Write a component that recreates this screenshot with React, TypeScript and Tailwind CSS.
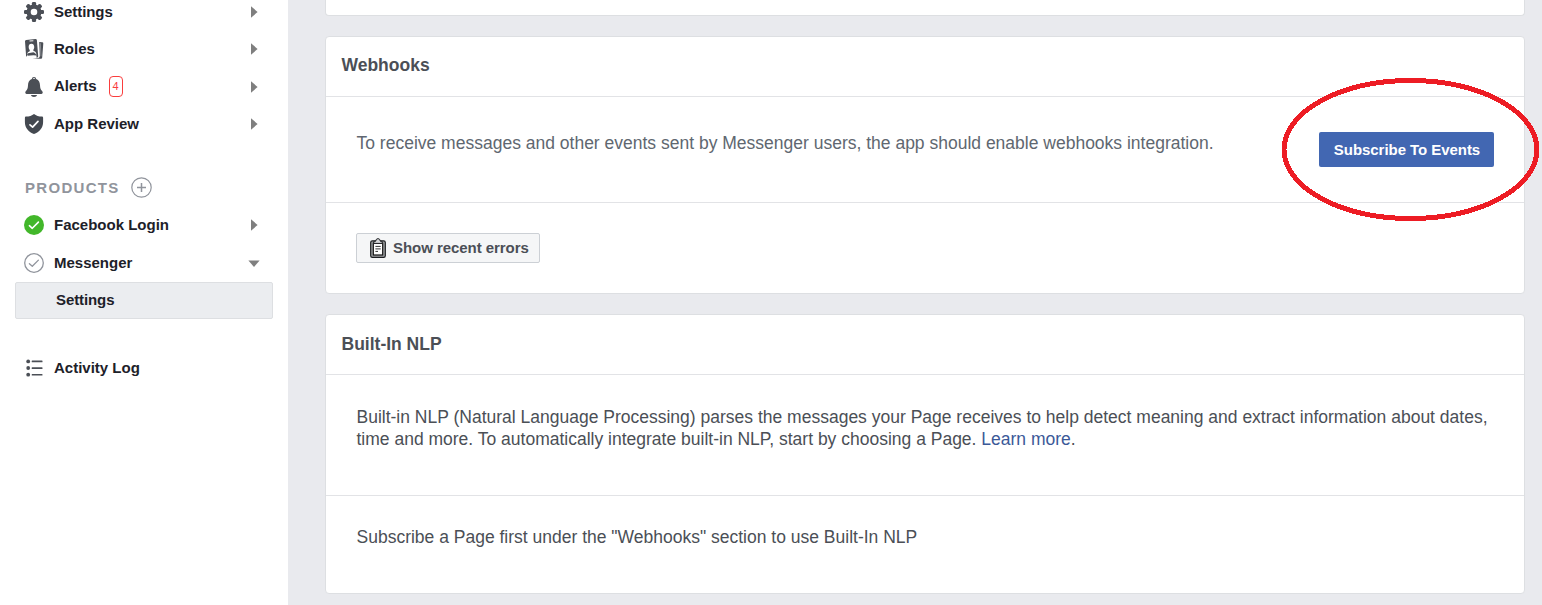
import type { ReactNode } from "react";

function Gear() {
  const teeth = [0, 45, 90, 135, 180, 225, 270, 315];
  return (
    <svg width="20" height="20" viewBox="0 0 20 20" className="block">
      <g fill="#4b4f56">
        {teeth.map((a) => (
          <rect key={a} x="7.9" y="0" width="4.2" height="5" rx="1.3" transform={`rotate(${a} 10 10)`} />
        ))}
      </g>
      <circle cx="10" cy="10" r="5.4" fill="none" stroke="#4b4f56" strokeWidth="4.2" />
    </svg>
  );
}

function Badges() {
  return (
    <svg width="20" height="20" viewBox="0 0 20 20" className="block">
      <path
        fill="#4b4f56"
        fillRule="evenodd"
        d="M2.2 0.9 11.4 0.1Q12.7 0 12.9 1.2L14.2 17.2Q14.2 18.6 12.9 18.7L12.6 18.7 12.4 16.4C12.2 14.7 10.8 13.7 9.4 13.2L4.1 14.2C3 15 2.9 16 3 17.6L2.1 17.2 1 2.2Q0.9 1 2.2 0.9ZM5.6 2.5 9.4 2.2 9.3 1.3 5.5 1.6ZM7.4 4.7C5.3 4.9 4.5 6.2 4.7 8.2 4.8 9.6 5.2 10.3 5.8 11L5.7 12.2C4.3 12.7 3.3 13.4 3.3 15L3.5 16.7 12.4 16 12.2 14.3C11.9 12.8 10.9 12.3 9.5 11.9L9.3 10.8C9.9 10 10.3 9.2 10.2 7.8 10 5.6 9.2 4.6 7.4 4.7Z"
      />
      <path d="M15.2 2.9 18.2 3.2Q19.4 3.3 19.3 4.4L18.2 18.5Q18.1 19.8 16.8 19.7L8.5 19.5 14.3 18.9Q15.9 18.5 15.8 16.9Z" fill="#4b4f56" />
      <path d="M16.3 4.2 17 17.3" stroke="#8a8d92" strokeWidth="1" />
    </svg>
  );
}

function Bell() {
  return (
    <svg width="20" height="20" viewBox="0 0 20 20" className="block">
      <path
        fill="#4b4f56"
        d="M7.8 1.9Q7.9 0 10 0T12.2 1.9C15 2.9 15.9 5.2 16 8.3 16.1 11.1 16.7 12.6 18.1 14.1 19.2 15.4 18.8 16.9 17.5 16.9H2.5C1.2 16.9.8 15.4 1.9 14.1 3.3 12.6 3.9 11.1 4 8.3 4.1 5.2 5 2.9 7.8 1.9ZM6.8 18.1H13.2Q12.5 20 10 20T6.8 18.1Z"
      />
      <path d="M8.9 1.7Q10 .9 11.1 1.7" stroke="#c6c8cb" strokeWidth="1" fill="none" />
    </svg>
  );
}

function Shield() {
  return (
    <svg width="20" height="20" viewBox="0 0 20 20" className="block">
      <path
        fill="#444950"
        d="M10 0C12 1.7 14.8 2.5 18 2.6Q19.1 2.7 19.1 3.8V8C19.1 14 15.2 18 10 20 4.8 18 .9 14 .9 8V3.8Q.9 2.7 2 2.6C5.2 2.5 8 1.7 10 0Z"
      />
      <path d="M6 10.9 8.6 13.2 14 7.4" stroke="#fff" strokeWidth="1.7" strokeLinecap="round" strokeLinejoin="round" fill="none" />
    </svg>
  );
}

function CheckCircle({ on }: { on?: boolean }) {
  return (
    <svg width="20" height="20" viewBox="0 0 20 20" className="block">
      <circle cx="10" cy="10" r={on ? 10 : 9.3} fill={on ? "#42b72a" : "none"} stroke={on ? "none" : "#90949c"} strokeWidth="1.3" />
      <path
        d="M5.4 10.7 8.3 13.3 14.4 7.1"
        stroke={on ? "#fff" : "#90949c"}
        strokeWidth={on ? 1.6 : 1.3}
        strokeLinecap="round"
        strokeLinejoin="round"
        fill="none"
      />
    </svg>
  );
}

function ListIcon() {
  return (
    <svg width="20" height="20" viewBox="0 0 20 20" className="block">
      {[3.4, 10, 16.7].map((y) => (
        <g key={y} fill="#4b4f56">
          <circle cx="4.2" cy={y} r="1.9" />
          <rect x="7.7" y={y - 0.8} width="10.8" height="1.7" rx="0.5" />
        </g>
      ))}
    </svg>
  );
}

function Clipboard() {
  return (
    <svg width="18" height="20" viewBox="0 0 18 20" className="block">
      <rect x="1.7" y="2.9" width="14.6" height="16.4" rx="1.6" fill="#a4a6a8" stroke="#1c1e21" strokeWidth="1.2" />
      <rect x="4.3" y="5.2" width="9.4" height="11.8" fill="#fff" stroke="#111" strokeWidth="1.2" />
      <path d="M4.8 5.4V3.3H6.6Q7 .6 9 .6T11.4 3.3H13.2V5.4Z" fill="#d5d6d8" stroke="#1c1e21" strokeWidth="1" />
      <path d="M6.4 8.4H11.7M6.4 10.9H11.7M6.4 13.4H9" stroke="#333" strokeWidth="1" />
    </svg>
  );
}

function Row({ icon, label, badge, arrow, size }: { icon: ReactNode; label: string; badge?: string; arrow?: "right" | "down"; size: string }) {
  return (
    <div className={`flex items-center pl-6 pr-[26px] ${size}`}>
      <span className="w-[30px] shrink-0">{icon}</span>
      <span className={badge ? "pb-[2px] leading-5" : "leading-5"}>{label}</span>
      {badge && (
        <span className="ml-3 flex h-[21px] w-[14px] items-center justify-center rounded-[4px] border border-[#fa3e3e] text-[11px] font-normal text-[#fa3e3e]">
          {badge}
        </span>
      )}
      {arrow && (
        <span className="ml-auto flex w-4 justify-center">
          {arrow === "right" ? (
            <svg width="8" height="12" viewBox="0 0 8 12" className="block"><path d="M1 .3 7.6 6 1 11.7Z" fill="#7f7f7f" /></svg>
          ) : (
            <svg width="12" height="7" viewBox="0 0 12 7" className="block shrink-0"><path d="M.4 .4H11.6L6 7Z" fill="#7f7f7f" /></svg>
          )}
        </span>
      )}
    </div>
  );
}

function Sidebar() {
  return (
    <aside className="h-full w-[288px] shrink-0 bg-white text-[15px] font-bold text-[#1d2129]">
      <Row icon={<Gear />} label="Settings" arrow="right" size="h-6 tracking-[-0.05px]" />
      <Row icon={<Badges />} label="Roles" arrow="right" size="mt-[7px] h-9" />
      <Row icon={<Bell />} label="Alerts" badge="4" arrow="right" size="h-[39px]" />
      <Row icon={<Shield />} label="App Review" arrow="right" size="-mt-px h-[38px]" />
      <div className="mt-[27px] flex h-[35px] items-center pl-[25px] text-[#90949c]">
        <span className="pt-px tracking-[1.3px]">PRODUCTS</span>
        <svg width="21" height="21" viewBox="0 0 21 21" className="ml-[11.5px] block">
          <circle cx="10.5" cy="10.5" r="9.7" fill="none" stroke="#90949c" strokeWidth="1.2" />
          <path d="M10.5 6V15M6 10.5H15" stroke="#90949c" strokeWidth="1.5" />
        </svg>
      </div>
      <Row icon={<CheckCircle on />} label="Facebook Login" arrow="right" size="mt-px h-[38px]" />
      <Row icon={<CheckCircle />} label="Messenger" arrow="down" size="h-[38px]" />
      <div className="ml-[15px] flex h-[37px] w-[258px] items-center rounded-[2px] border border-[#dddfe2] bg-[#ebedf0] pl-10 tracking-[-0.1px]">Settings</div>
      <Row icon={<ListIcon />} label="Activity Log" size="mt-[30px] h-[38px]" />
    </aside>
  );
}

export default function App() {
  return (
    <div className="relative flex h-[605px] w-[1542px] overflow-hidden bg-[#e9eaee] font-['Liberation_Sans',Arial,sans-serif]">
      <Sidebar />
      <main className="flex w-[1237px] flex-col pl-[37px] text-[17.5px] leading-[22px] text-[#4b4f56]">
        <section className="h-4 w-[1200px] shrink-0 rounded-b-[4px] border border-t-0 border-[#dddfe2] bg-white" />
        <section className="mt-5 h-[258px] w-[1200px] shrink-0 rounded-[4px] border border-[#dddfe2] bg-white">
          <h2 className="flex h-[60px] items-center border-b border-[#e2e3e6] pb-[3px] pl-[15.5px] font-bold">Webhooks</h2>
          <div className="flex h-[106px] items-center justify-between border-b border-[#e2e3e6] pl-[30.5px] pr-[30px]">
            <p className="whitespace-nowrap pb-[13px] text-[#606770]">
              To receive messages and other events sent by Messenger users, the app should enable webhooks integration.
            </p>
            <button className="h-[35px] w-[175px] rounded-[2px] bg-[#4267b2] pl-px text-[15px] font-bold tracking-[-0.05px] text-white">Subscribe To Events</button>
          </div>
          <button className="ml-[30px] mt-[30px] flex h-[30px] w-[184px] items-center rounded-[2px] border border-[#ccd0d5] bg-[#f5f6f7] pl-3 text-[15px] font-bold">
            <Clipboard />
            <span className="ml-1.5 whitespace-nowrap tracking-[-0.05px]">Show recent errors</span>
          </button>
        </section>
        <section className="mt-5 h-[280px] w-[1200px] shrink-0 rounded-[4px] border border-[#dddfe2] bg-white">
          <h2 className="flex h-[60px] items-center border-b border-[#e2e3e6] pb-[2px] pl-[15.5px] font-bold">Built-In NLP</h2>
          <div className="h-[121px] border-b border-[#e2e3e6] pl-[30.5px] pt-[31px]">
            <p className="whitespace-nowrap">
              Built-in NLP (Natural Language Processing) parses the messages your Page receives to help detect meaning and extract information about dates,
              <br />
              time and more. To automatically integrate built-in NLP, start by choosing a Page. <a className="text-[#3b5998]">Learn more</a>.
            </p>
          </div>
          <p className="pl-[30.5px] pt-[30px]">Subscribe a Page first under the "Webhooks" section to use Built-In NLP</p>
        </section>
      </main>
      <svg width="260" height="144" viewBox="0 0 260 144" className="pointer-events-none absolute left-[1281px] top-[77px]">
        <ellipse cx="129.5" cy="72.5" rx="126.5" ry="69" fill="none" stroke="#ed1c24" strokeWidth="5" shapeRendering="crispEdges" />
      </svg>
    </div>
  );
}
